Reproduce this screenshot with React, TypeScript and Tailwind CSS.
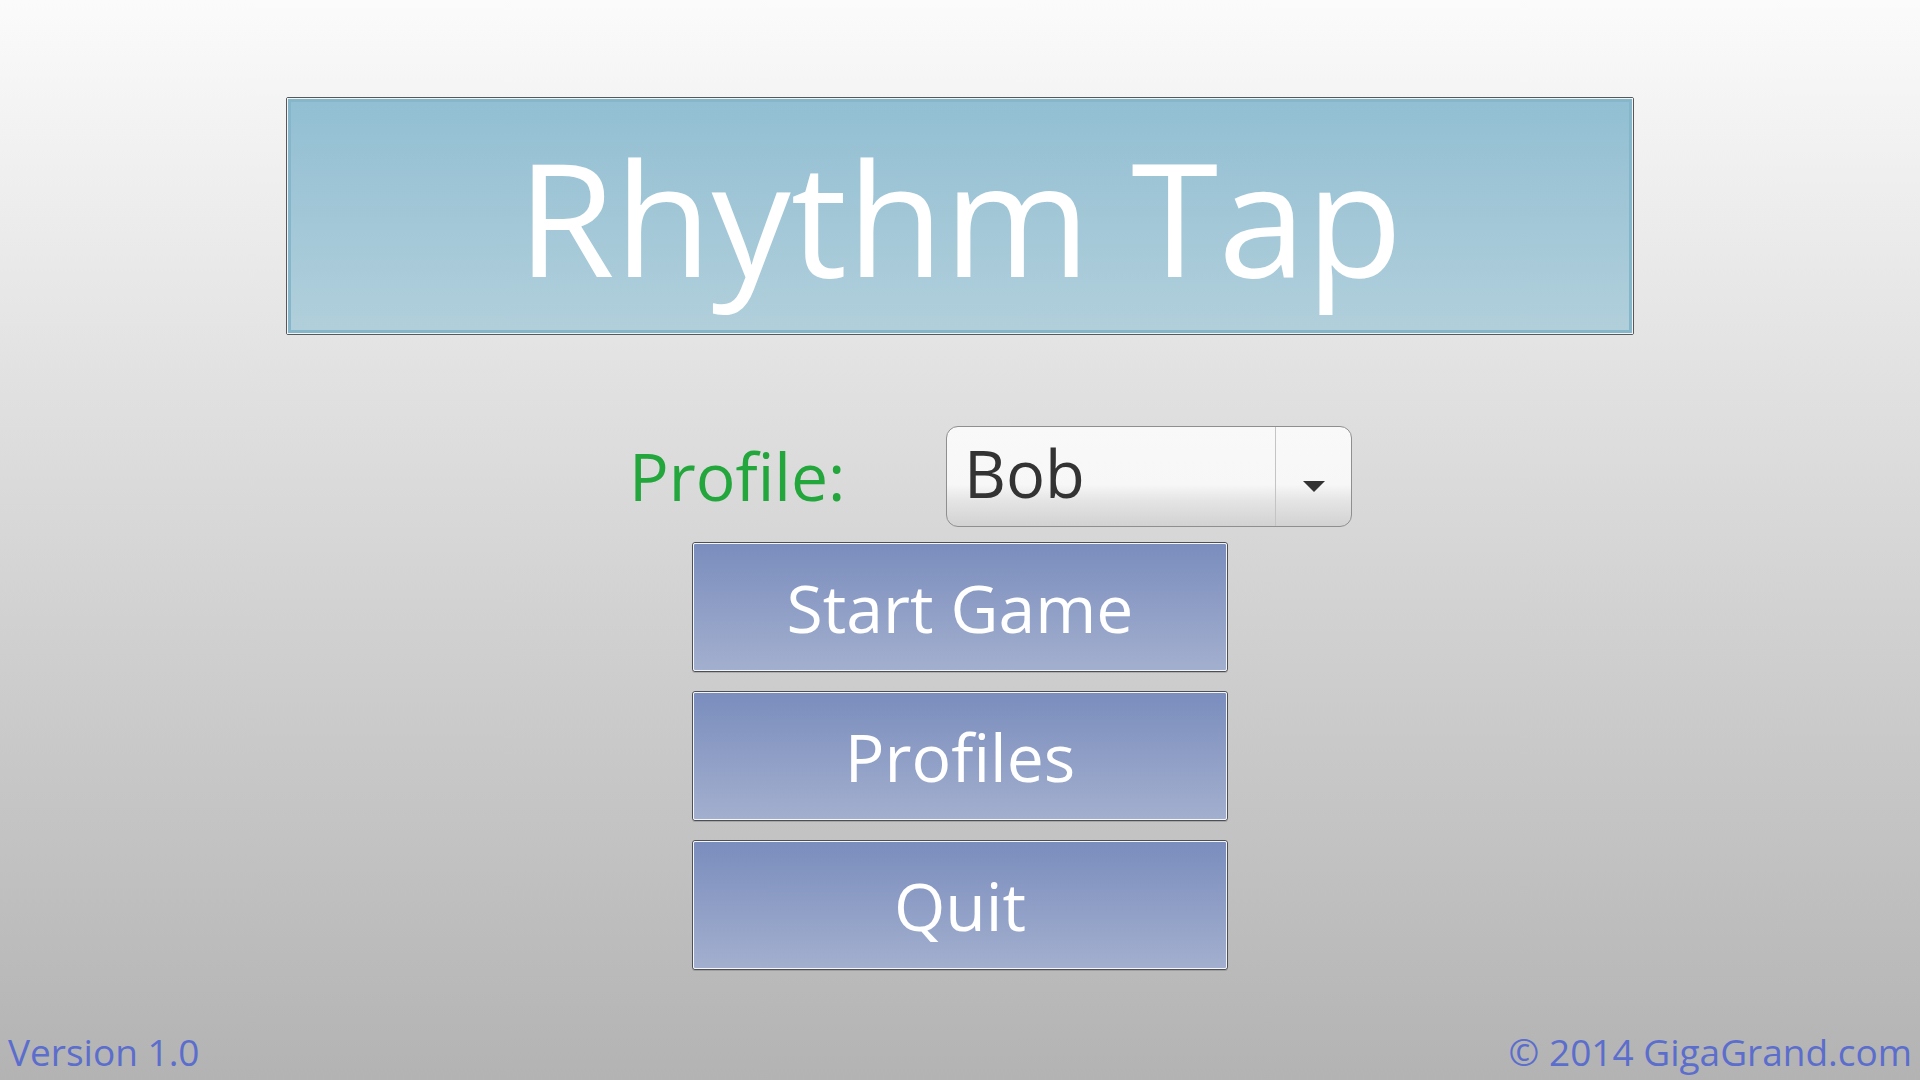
import React from "react";

const font = { fontFamily: '"Open Sans", "Noto Sans", sans-serif' };

function MenuButton({ label }: { label: string }) {
  return (
    <button className="h-[130px] w-[536px] rounded-[3px] border border-[#4c5055] p-0 shadow-[0_1px_0_rgba(0,0,0,0.15)]">
      <div className="flex h-full w-full items-center justify-center rounded-[2px] border border-[#f4f6fb] bg-gradient-to-b from-[#7a8dbd] to-[#a3afce]">
        <span className="text-[66px] leading-none text-white">{label}</span>
      </div>
    </button>
  );
}

export default function App() {
  return (
    <div
      className="flex h-screen w-full flex-col items-center bg-gradient-to-b from-[#fbfbfb] to-[#b3b3b3]"
      style={font}
    >
      {/* title banner */}
      <div className="mt-[97px] h-[238px] w-[1348px] rounded-[2px] border border-[#55595c]">
        <div className="h-full w-full border border-[#f2f5f6]">
          <div className="flex h-full w-full items-center justify-center border-[3px] border-[#86b6ca] bg-gradient-to-b from-[#92bfd3] to-[#b1cfdb]">
            <h1 className="pb-[1px] text-[158px] font-normal leading-none text-white">Rhythm Tap</h1>
          </div>
        </div>
      </div>

      {/* profile picker */}
      <div className="mt-[91px] flex w-full items-center pl-[629px]">
        <span className="w-[317px] pb-[4px] text-[66px] leading-none text-[#23a63c]">Profile:</span>
        <div className="relative flex h-[101px] w-[406px] overflow-hidden rounded-[12px] border border-[#8f8f8f] bg-[linear-gradient(to_bottom,#f9f9f9_0%,#f7f7f7_58%,#e4e4e4_75%,#d2d2d2_100%)]">
          <div className="flex flex-1 items-center pl-[17px] pb-[6px]">
            <span className="text-[65px] leading-none text-[#333333]">Bob</span>
          </div>
          <div className="flex w-[76px] items-center justify-center border-l border-[#c4c4c4]">
            <svg width="22" height="11" viewBox="0 0 22 11" className="mt-[20px]">
              <polygon points="0,0 22,0 11,11" fill="#333333" />
            </svg>
          </div>
        </div>
      </div>

      {/* menu */}
      <div className="mt-[15px] flex flex-col items-center gap-[19px]">
        <MenuButton label="Start Game" />
        <MenuButton label="Profiles" />
        <MenuButton label="Quit" />
      </div>

      <div className="mt-auto flex w-full items-end justify-between px-[8px] pb-[10px] text-[37px] leading-none text-[#5b6dcd]">
        <span>Version 1.0</span>
        <span>© 2014 GigaGrand.com</span>
      </div>
    </div>
  );
}
